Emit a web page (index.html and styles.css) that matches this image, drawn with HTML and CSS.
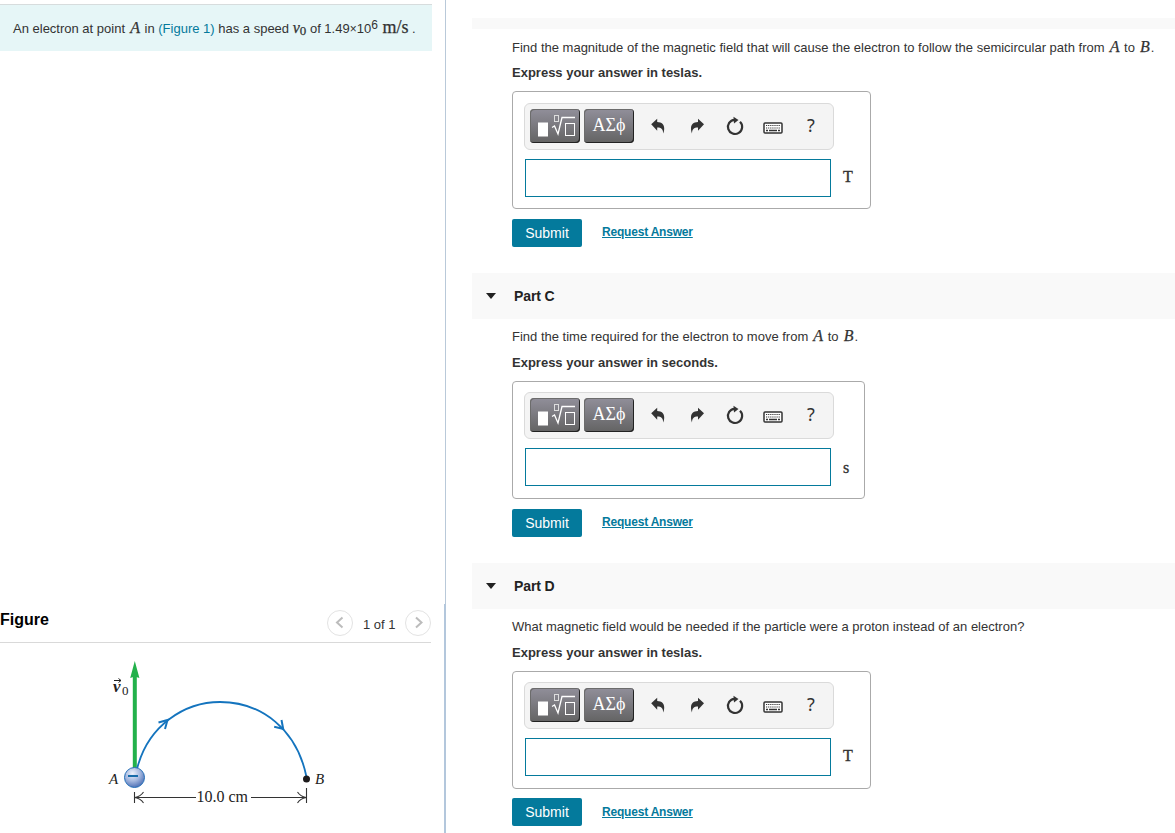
FILE: index.html
```html
<!DOCTYPE html>
<html lang="en">
<head>
<meta charset="utf-8">
<title>Electron in a magnetic field</title>
<link rel="stylesheet" href="styles.css">
</head>
<body>
<svg class="defs" width="0" height="0">
  <defs>
    <symbol id="tpl" viewBox="0 0 50 34">
      <rect x="8" y="13.500" width="10" height="14" fill="#fff"/>
      <g fill="none" stroke="#fff"><rect x="24.500" y="6.500" width="4" height="6" stroke="#ddd"/><path d="M22 18.500l2.500-1.500 3.500 8L32 8.500H45" stroke-width="1.300"/><rect x="35.500" y="14.500" width="9" height="12"/></g>
    </symbol>
    <symbol id="undo" viewBox="0 0 16 16"><path d="M1.200 6.200L7.200.8v3.200c4.700.1 7 2.700 7 6.200 0 2-.3 3.500-1 5.300-.1-4.300-1.700-6-6-6v3.200z"/></symbol>
    <symbol id="redo" viewBox="0 0 16 16"><path d="M15 6.200L9 .8v3.200c-4.700.1-7 2.700-7 6.200 0 2 .3 3.500 1 5.300.1-4.300 1.700-6 6-6v3.200z"/></symbol>
    <symbol id="reset" viewBox="0 0 18 20"><path d="M14 5.800A7.100 7.100 0 1 1 8.500 3.800" fill="none" stroke="#333" stroke-width="2.200"/><path d="M7.500.8l5 3.200-4.500 3.500z"/></symbol>
    <symbol id="keys" viewBox="0 0 20 12"><rect x="1" y="1" width="18" height="10" rx="1" fill="#fff" stroke="#333" stroke-width="1.500"/><path d="M3 3.500h14M3 6h14" stroke="#333" stroke-width="1.200" stroke-dasharray="1.200 .9"/><path d="M3 8.500h2M6 8.500h8M15 8.500h2" stroke="#333" stroke-width="1.300"/></symbol>
  </defs>
</svg>
<div class="page">
  <aside class="left">
    <div class="intro-pane">
      <p class="intro">An electron at point <i>A</i> in <a>(Figure 1)</a> has a speed <span class="v"><i>v</i><sub>0</sub></span> of 1.49<span class="times">×</span>10<sup>6</sup> <span class="unit">m/s</span> .</p>
    </div>
    <div class="figure-pane">
      <div class="figure-head">
        <h2>Figure</h2>
        <div class="pager">
          <span class="round"><svg width="24" height="24" viewBox="0 0 24 24"><path d="M14.500 6.500l-5.500 5 5.500 5"/></svg></span>
          <span class="count">1 of 1</span>
          <span class="round"><svg width="24" height="24" viewBox="0 0 24 24"><path d="M10 6.500l5.500 5-5.500 5"/></svg></span>
        </div>
      </div>
      <svg class="drawing" width="250" height="170" viewBox="0 0 250 170">
        <defs><radialGradient id="ball" cx=".4" cy=".3" r=".75"><stop offset="0" stop-color="#edf1fb"/><stop offset=".5" stop-color="#a5b8df"/><stop offset="1" stop-color="#4468b1"/></radialGradient></defs>
        <path d="M44.800 119V25" stroke="#22b14b" stroke-width="4"/>
        <path d="M44.800 11l4.600 17q-4.600-2-9.200 0z" fill="#22b14b"/>
        <g fill="none" stroke="#1474be" stroke-width="1.800"><path d="M47 119C58 75 95 52 130 52C172 52 207 80 216.500 127"/><path d="M68.500 72.500l9-2.500-2.500 9M191.500 70l1.700 9-9-2.200" stroke-width="2"/></g>
        <circle cx="44.500" cy="127.500" r="10" fill="url(#ball)" stroke="#2670b8"/>
        <path d="M38 126h10" stroke="#176ba9" stroke-width="2"/>
        <circle cx="216.500" cy="129" r="3.500" fill="#1d1b1c"/>
        <g fill="none" stroke="#333" stroke-width="1.100"><path d="M44.500 142v11M216.500 138v15M46 147.500h60M161 147.500h54M53.500 142q-3 4.500-8.500 5.500q5.500 1 8.500 5.500M207.500 142q3 4.500 8.500 5.500q-5.500 1-8.500 5.500"/></g>
        <g font-family="Liberation Serif,serif" font-size="15" fill="#222"><text x="19" y="134" font-style="italic">A</text><text x="225" y="134" font-style="italic">B</text><text x="106.500" y="152" font-size="16">10.0 cm</text><text x="23" y="42" font-style="italic" font-weight="bold" font-size="17">v</text><text x="32" y="45" font-size="13">0</text></g>
        <path d="M24 30.500h7M28.500 28.500l2.500 2-2.500 2" fill="none" stroke="#222"/>
      </svg>
    </div>
  </aside>
  <main class="right">
    <section>
      <div class="bar cut"></div>
      <div class="body">
        <p class="q low">Find the magnitude of the magnetic field that will cause the electron to follow the semicircular path from <i>A</i> to <i>B</i>.</p>
        <p class="express">Express your answer in teslas.</p>
        <div class="answer">
          <div class="tools"><span class="key"><svg width="50" height="34"><use href="#tpl"/></svg></span><span class="key greek">ΑΣϕ</span><svg class="undo" width="16" height="16"><use href="#undo"/></svg><svg class="redo" width="16" height="16"><use href="#redo"/></svg><svg class="reset" width="18" height="20"><use href="#reset"/></svg><svg class="keys" width="20" height="12"><use href="#keys"/></svg><span class="help">?</span></div>
          <div class="entry"><div class="field"></div><span class="u">T</span></div>
        </div>
        <div class="actions"><span class="submit">Submit</span><a class="request">Request Answer</a></div>
      </div>
    </section>
    <section>
      <div class="bar"><span class="caret"></span>Part C</div>
      <div class="body">
        <p class="q">Find the time required for the electron to move from <i>A</i> to <i>B</i>.</p>
        <p class="express">Express your answer in seconds.</p>
        <div class="answer narrow late">
          <div class="tools"><span class="key"><svg width="50" height="34"><use href="#tpl"/></svg></span><span class="key greek">ΑΣϕ</span><svg class="undo" width="16" height="16"><use href="#undo"/></svg><svg class="redo" width="16" height="16"><use href="#redo"/></svg><svg class="reset" width="18" height="20"><use href="#reset"/></svg><svg class="keys" width="20" height="12"><use href="#keys"/></svg><span class="help">?</span></div>
          <div class="entry"><div class="field"></div><span class="u sec">s</span></div>
        </div>
        <div class="actions"><span class="submit">Submit</span><a class="request">Request Answer</a></div>
      </div>
    </section>
    <section>
      <div class="bar"><span class="caret"></span>Part D</div>
      <div class="body">
        <p class="q">What magnetic field would be needed if the particle were a proton instead of an electron?</p>
        <p class="express">Express your answer in teslas.</p>
        <div class="answer late">
          <div class="tools"><span class="key"><svg width="50" height="34"><use href="#tpl"/></svg></span><span class="key greek">ΑΣϕ</span><svg class="undo" width="16" height="16"><use href="#undo"/></svg><svg class="redo" width="16" height="16"><use href="#redo"/></svg><svg class="reset" width="18" height="20"><use href="#reset"/></svg><svg class="keys" width="20" height="12"><use href="#keys"/></svg><span class="help">?</span></div>
          <div class="entry"><div class="field"></div><span class="u">T</span></div>
        </div>
        <div class="actions last"><span class="submit">Submit</span><a class="request">Request Answer</a></div>
      </div>
    </section>
  </main>
</div>
</body>
</html>
```
FILE: styles.css
```css
* { box-sizing: border-box; }
body { margin: 0; background: #fff; color: #333; font: 13px "Liberation Sans", Arial, sans-serif; overflow: hidden; }
p, h2 { margin: 0; }
.defs { position: absolute; }
.page { display: grid; grid-template-columns: 446px 1fr; height: 833px; }
.left { display: flex; flex-direction: column; }
.intro-pane { height: 604px; padding: 4px 13px 0 0; border-right: 1px solid #b9c9d9; }
.intro { height: 47px; padding-left: 13px; border-top: 1px solid #d7dcdd; background: #e6f6f7; line-height: 47px; white-space: nowrap; }
.intro a { color: #047a9c; }
i, .v, .unit { font-family: "Liberation Serif", serif; font-size: 16px; line-height: 1; -webkit-text-stroke: .25px; }
i { margin: 0 1px 0 1.5px; }
.v i { margin: 0; }
.v sub { font-size: 13px; line-height: 0; vertical-align: -2px; }
.times { font-size: 12px; }
sup { font-size: 12px; line-height: 0; vertical-align: 4px; }
.unit { margin-left: 1px; font-size: 18px; }
.figure-pane { flex: 1; border-right: 2px solid #b3c7dc; padding-right: 13px; }
.figure-head { display: flex; justify-content: space-between; height: 39px; border-bottom: 1px solid #d9d9d9; }
h2 { padding-top: 6px; font-size: 16px; line-height: 19px; color: #000; }
.pager { display: flex; align-items: center; gap: 10px; height: 37px; }
.round { width: 26px; height: 26px; border: 1px solid #e3e3e3; border-radius: 50%; }
.round svg { display: block; fill: none; stroke: #bcbcbc; stroke-width: 2; }
.count { width: 32px; padding-top: 3px; white-space: nowrap; }
.drawing { display: block; margin: 7px 0 0 90px; }
.right { padding: 18px 0 0 26px; }
section { height: 290px; }
section:first-child { height: 255px; }
.bar { display: flex; align-items: center; gap: 18px; height: 46px; padding-left: 14px; background: #f9f9f9; color: #222; font-size: 14px; font-weight: bold; letter-spacing: -.1px; }
.bar.cut { height: 11px; }
.caret { width: 10px; border: 5px solid transparent; border-top: 6px solid #222; border-bottom: 0; }
.body { padding-left: 40px; }
.q { height: 31px; padding-top: 5px; line-height: 26px; white-space: nowrap; }
.q.low { padding-top: 6px; }
.express { height: 31px; line-height: 25px; font-weight: bold; }
.answer { width: 359px; height: 118px; padding: 11px; border: 1px solid #aaa; border-radius: 4px; }
.answer.narrow { width: 353px; }
.answer.late { padding-top: 10px; }
.tools { display: flex; width: 310px; height: 47px; padding: 5px; border: 1px solid #dadada; border-radius: 6px; background: #f4f4f4; fill: #333; }
.key { width: 50px; height: 34px; margin-right: 4px; border-radius: 4px; background: linear-gradient(#918f9a, #636363); box-shadow: inset -1px -1px #222, inset 1px 1px #6c6c6c; }
.key svg { display: block; }
.greek { color: #fff; font: 18px/33px "Liberation Serif", serif; text-align: center; }
.undo { margin: 9px 0 0 12px; }
.redo { margin: 9px 0 0 23px; }
.reset { margin: 7px 0 0 21px; }
.keys { margin: 13px 0 0 19px; }
.help { margin: 5px 0 0 24px; font: 18px/22px "Noto Sans", sans-serif; }
.entry { display: flex; align-items: center; gap: 12px; margin: 9px 0 0 1px; }
.field { width: 306px; height: 38px; border: 1px solid #047a9c; background: #fff; }
.u { padding-bottom: 2px; font: 16px/20px "Liberation Serif", serif; -webkit-text-stroke: .35px; }
.u.sec { padding: 2px 0 0; }
.actions { display: flex; gap: 20px; padding-top: 10px; }
.actions.last { padding-top: 9px; }
.submit { width: 70px; height: 28px; border-radius: 2px; background: #047a9c; color: #fff; font-size: 14px; line-height: 28px; text-align: center; }
.request { padding-top: 6px; color: #047a9c; font-size: 12px; font-weight: bold; letter-spacing: -.2px; text-decoration: underline; }
.last .request { padding-top: 7px; }
```
